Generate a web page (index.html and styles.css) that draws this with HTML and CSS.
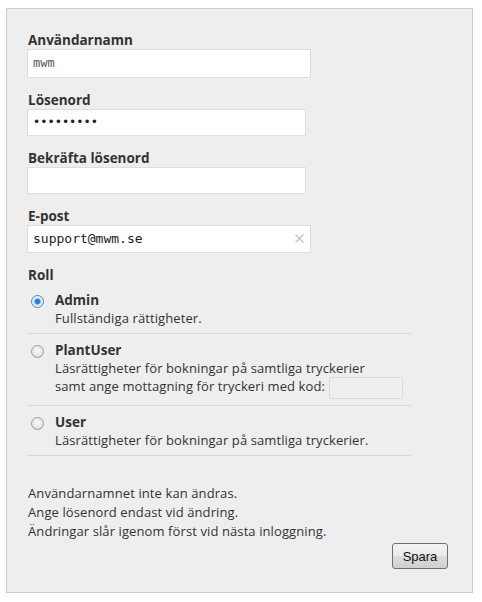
FILE: index.html
```
<!DOCTYPE html>
<html lang="sv">
<head>
    <meta charset="UTF-8">
    <title>Användare</title>
    <link rel="stylesheet" href="styles.css">
</head>
<body>
    <form class="panel">
        <div class="field">
            <label class="field-label">Användarnamn</label>
            <div class="input input-wide input-readonly">mwm</div>
        </div>
        <div class="field">
            <label class="field-label">Lösenord</label>
            <div class="input input-narrow input-short">•••••••••</div>
        </div>
        <div class="field">
            <label class="field-label">Bekräfta lösenord</label>
            <div class="input input-narrow input-short"></div>
        </div>
        <div class="field">
            <label class="field-label">E-post</label>
            <div class="input input-wide input-email">support@mwm.se
                <svg class="clear" width="9" height="9" viewBox="0 0 9 9"><path d="M0.5 0.5L8.5 8.5M8.5 0.5L0.5 8.5" stroke="#c4c4c4" stroke-width="1.3" fill="none"/></svg>
            </div>
        </div>

        <div class="field-label">Roll</div>
        <ul class="roles">
            <li class="role">
                <span class="radio checked"></span>
                <div>
                    <div class="role-name">Admin</div>
                    <div class="role-desc">Fullständiga rättigheter.</div>
                </div>
            </li>
            <li class="role">
                <span class="radio"></span>
                <div>
                    <div class="role-name">PlantUser</div>
                    <div class="role-desc">Läsrättigheter för bokningar på samtliga tryckerier</div>
                    <div class="role-desc">samt ange mottagning för tryckeri med kod: <span class="code-input"></span></div>
                </div>
            </li>
            <li class="role">
                <span class="radio"></span>
                <div>
                    <div class="role-name">User</div>
                    <div class="role-desc">Läsrättigheter för bokningar på samtliga tryckerier.</div>
                </div>
            </li>
        </ul>

        <div class="notes">
            <p>Användarnamnet inte kan ändras.</p>
            <p>Ange lösenord endast vid ändring.</p>
            <p>Ändringar slår igenom först vid nästa inloggning.</p>
        </div>

        <div class="actions">
            <button type="button" class="save">Spara</button>
        </div>
    </form>
</body>
</html>
```

FILE: styles.css
```
* {
    margin: 0;
    padding: 0;
    box-sizing: border-box;
}

body {
    background-color: #fff;
    color: #333;
    font-family: "Open Sans", Arial, sans-serif;
    font-size: 13px;
    letter-spacing: 0.1px;
}

.panel {
    margin: 8px 0 0 6px;
    width: 467px;
    height: 585px;
    padding: 22px 20px 0 20px;
    background-color: #eeeeee;
    border: 1px solid #cdcdcd;
}

.field {
    margin-bottom: 13px;
}

.field-label {
    display: block;
    height: 18px;
    line-height: 18px;
    padding-left: 1px;
    font-size: 13.5px;
    font-weight: bold;
    letter-spacing: 0;
    color: #333;
}

.input {
    position: relative;
    height: 27px;
    line-height: 25px;
    padding: 0 5px;
    background-color: #fff;
    border: 1px solid #dedede;
    font-family: "DejaVu Sans Mono", "Liberation Mono", monospace;
    font-size: 13px;
    letter-spacing: 0;
    color: #222;
}

.input-wide {
    width: 284px;
    height: 29px;
    line-height: 27px;
}

.input-narrow {
    width: 279px;
}

.input-email {
    height: 28px;
    line-height: 26px;
}

.input-readonly {
    font-size: 12px;
    color: #555;
}

.input-short {
    font-size: 12px;
}

.clear {
    position: absolute;
    right: 6px;
    top: 8px;
}

.roles {
    list-style: none;
    width: 384px;
    margin-bottom: 28px;
}

.role {
    display: flex;
    align-items: flex-start;
    gap: 11px;
    padding: 7px 0 6px 4px;
    border-bottom: 1px solid #d8d8d8;
}

.role-name {
    height: 18px;
    line-height: 18px;
    font-size: 13.5px;
    font-weight: bold;
    letter-spacing: 0;
    color: #333;
}

.role-desc {
    line-height: 18px;
    color: #333;
}

.radio {
    flex: none;
    width: 13px;
    height: 13px;
    margin-top: 4px;
    border-radius: 50%;
    border: 1px solid #9a9a9a;
    background: radial-gradient(circle at 50% 40%, #fafafa 0%, #e6e6e6 60%, #cfcfcf 100%);
}

.radio.checked {
    border-color: #5a7fa8;
    background: radial-gradient(circle, #1a6fc2 0%, #2b8be0 30%, #cfe3f5 45%, #eef4fa 70%, #d8e3ee 100%);
}

.code-input {
    display: inline-block;
    width: 74px;
    height: 22px;
    vertical-align: middle;
    border: 1px solid #dcdcdc;
    background-color: #efefef;
}

.notes {
    padding-left: 1px;
}

.notes p {
    line-height: 19px;
    color: #333;
}

.actions {
    display: flex;
    justify-content: flex-end;
    padding-right: 4px;
    margin-top: 2px;
}

.save {
    width: 56px;
    height: 26px;
    font-family: Arial, sans-serif;
    font-size: 13px;
    letter-spacing: 0;
    color: #111;
    border: 1px solid #707070;
    border-radius: 3px;
    background: linear-gradient(to bottom, #f2f2f2 0%, #ebebeb 50%, #dddddd 51%, #cfcfcf 100%);
}
```
